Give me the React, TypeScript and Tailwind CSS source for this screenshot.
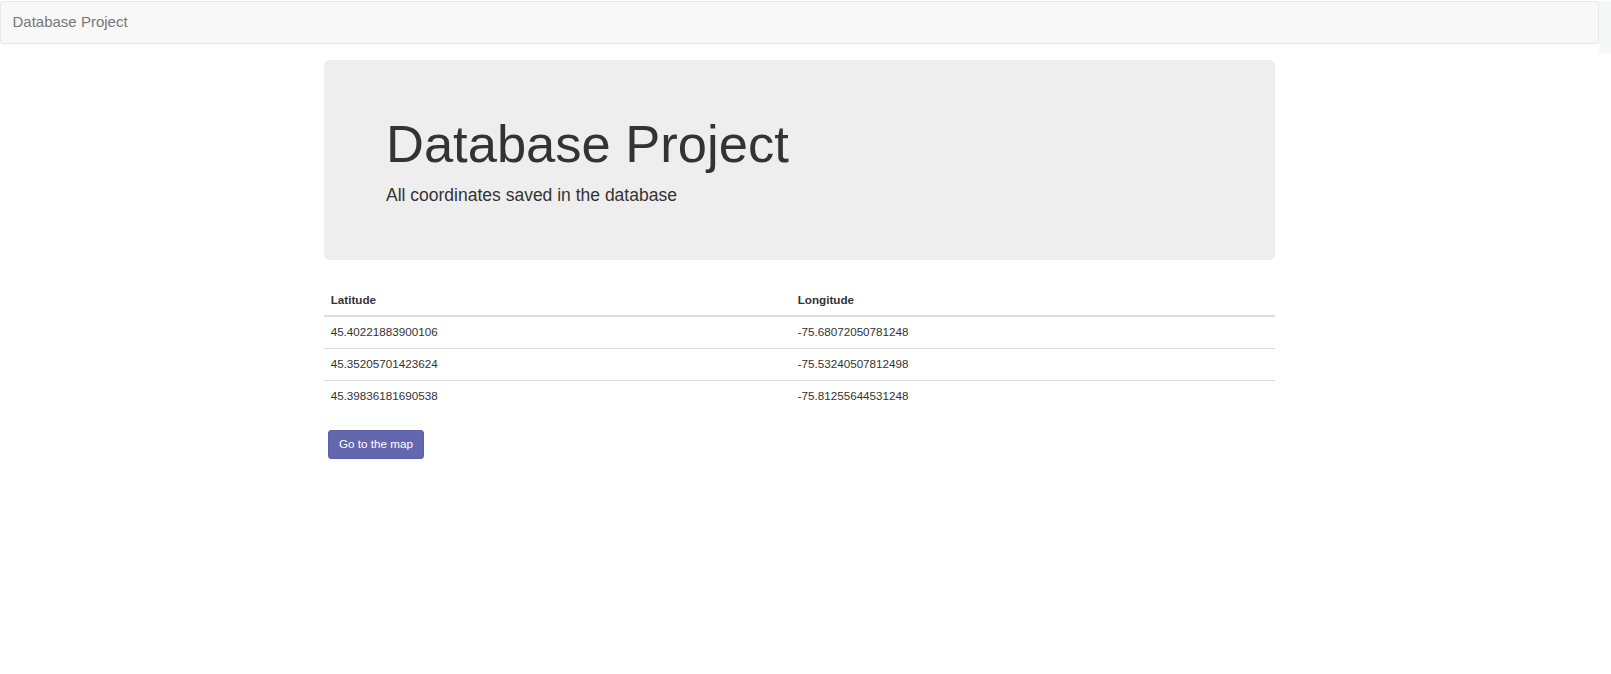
import React from 'react';

const coords = [
  { lat: '45.40221883900106', lng: '-75.68072050781248' },
  { lat: '45.35205701423624', lng: '-75.53240507812498' },
  { lat: '45.39836181690538', lng: '-75.81255644531248' },
];

const App: React.FC = () => {
  return (
    <div className="relative min-h-[674px] bg-white text-[#333] font-['Liberation_Sans',Arial,sans-serif] text-[11.67px] leading-[16.67px]">
      <div className="pr-3">
        <nav className="h-[43px] mt-px bg-[#f8f8f8] border border-[#e7e7e7] rounded-[3px] flex items-center">
          <span className="px-[11.5px] text-[15px] leading-[16.67px] text-[#777]">Database Project</span>
        </nav>
      </div>
      <div className="absolute top-0 right-0 w-3 h-[52px] bg-[#f6f8f8]" />

      <div className="w-[951px] mx-auto mt-[16px] pr-[12px] box-content">
        <div className="bg-[#eee] rounded-[5px] h-[200px] px-[62px] pt-[55px]">
          <h1 className="text-[52.5px] leading-[57.75px] font-normal text-[#333]">Database Project</h1>
          <p className="mt-[9px] text-[17.5px] leading-[26px] text-[#333]">All coordinates saved in the database</p>
        </div>

        <table className="w-full mt-[25px] mb-[16.67px] border-collapse text-left">
          <thead>
            <tr className="border-b-2 border-[#ddd]">
              <th className="w-[467px] px-[6.67px] py-[6.67px] font-bold">Latitude</th>
              <th className="px-[6.67px] py-[6.67px] font-bold">Longitude</th>
            </tr>
          </thead>
          <tbody>
            {coords.map((c, i) => (
              <tr key={i} className={i > 0 ? 'border-t-[1.5px] border-[#ddd]' : ''}>
                <td className="px-[6.67px] py-[7.2px]">{c.lat}</td>
                <td className="px-[6.67px] py-[7.2px]">{c.lng}</td>
              </tr>
            ))}
          </tbody>
        </table>

        <button className="ml-[4px] mt-[1px] h-[29px] px-[10px] rounded-[3px] bg-[#6367ae] border border-[#5c60a6] text-white text-[11.67px] leading-[16.67px]">
          Go to the map
        </button>
      </div>
    </div>
  );
};

export default App;
